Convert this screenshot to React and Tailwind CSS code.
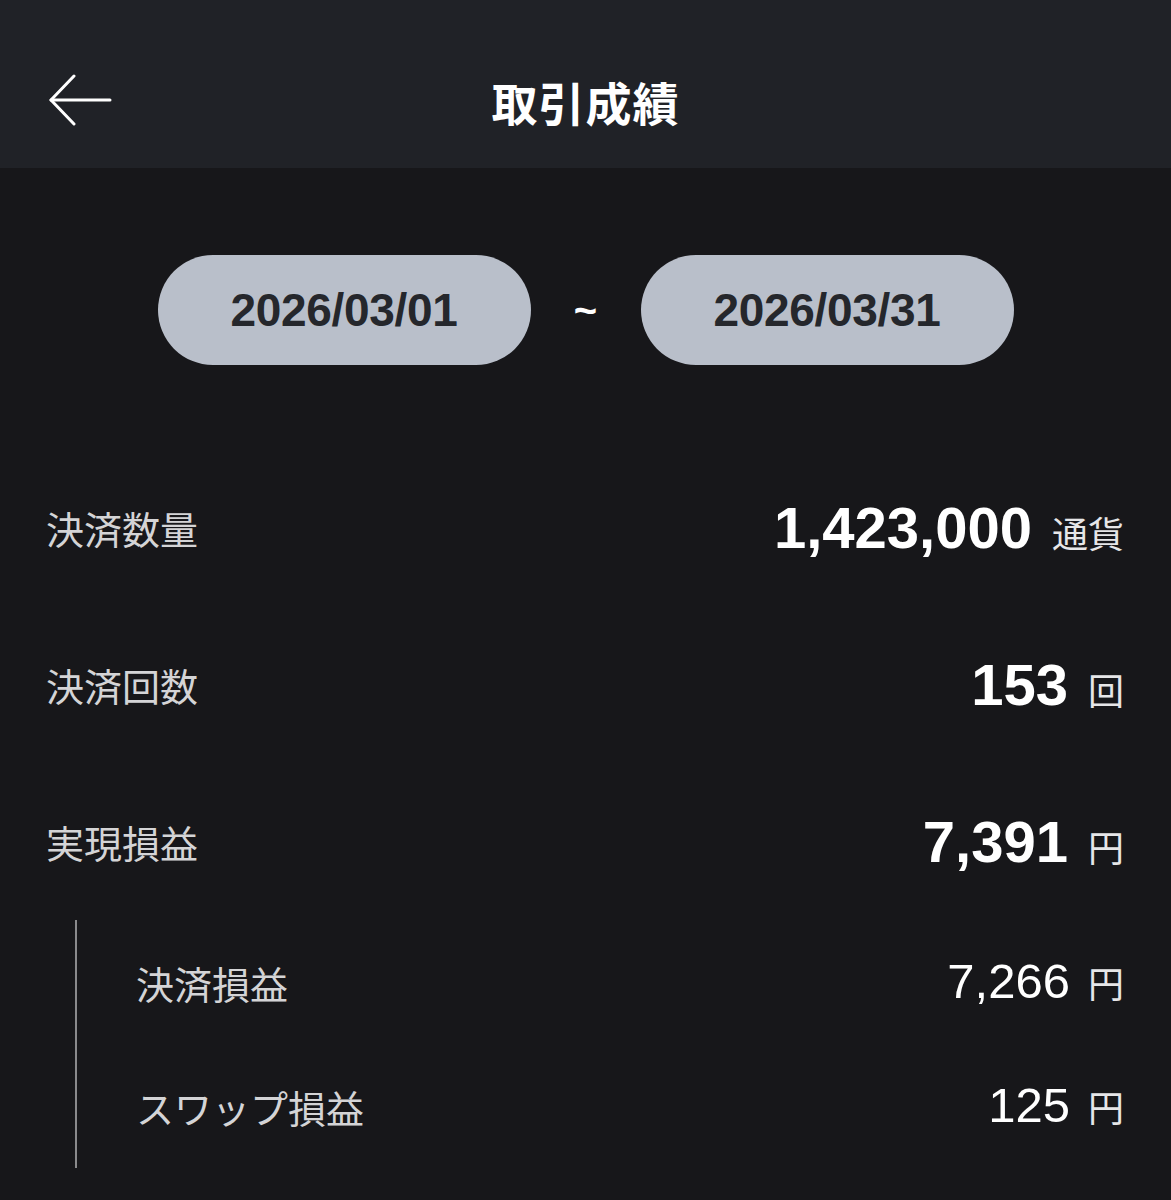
import React from "react"

const jp = { fontFamily: '"Noto Sans CJK JP", "Noto Sans", sans-serif' }
const num = { fontFamily: '"Liberation Sans", Arial, sans-serif' }

const BackArrow = () => (
  <svg width="64" height="52" viewBox="0 0 64 52" fill="none" stroke="#ffffff" strokeWidth="3" strokeLinecap="round" strokeLinejoin="round">
    <path d="M3 26 H62" />
    <path d="M26 2 L3 26 L26 50" />
  </svg>
)

const DatePill = ({ children }) => (
  <div
    className="w-[373px] h-[110px] rounded-full bg-[#b9bfca] flex items-center justify-center text-[46px] font-bold text-[#25272c] tracking-[-0.3px]"
    style={num}
  >
    {children}
  </div>
)

const MainRow = ({ label, value, unit }) => (
  <div className="h-[157px] flex items-center justify-between">
    <span className="text-[38px] text-[#d4d4d6]" style={jp}>{label}</span>
    <div className="flex items-baseline gap-[20px]">
      <span className="text-[58px] font-bold text-white" style={num}>{value}</span>
      <span className="text-[36px] text-[#e6e6e8]" style={jp}>{unit}</span>
    </div>
  </div>
)

const SubRow = ({ label, value, unit }) => (
  <div className="h-[124px] flex items-center justify-between">
    <span className="text-[38px] text-[#d4d4d6]" style={jp}>{label}</span>
    <div className="flex items-baseline gap-[18px]">
      <span className="text-[49px] text-white" style={num}>{value}</span>
      <span className="text-[36px] text-[#e6e6e8]" style={jp}>{unit}</span>
    </div>
  </div>
)

export default function App() {
  return (
    <div className="w-[1171px] min-h-[1200px] bg-[#17171a]">
      <header className="relative h-[168px] bg-[#202227] flex items-center justify-center pt-[34px]">
        <div className="absolute left-[48px] top-[74px]">
          <BackArrow />
        </div>
        <h1 className="text-[46px] font-bold text-white tracking-[1px]" style={jp}>取引成績</h1>
      </header>

      <div className="pt-[87px] flex items-center justify-center gap-[36px]">
        <DatePill>2026/03/01</DatePill>
        <span className="text-[40px] font-bold text-white w-[38px] text-center" style={num}>~</span>
        <DatePill>2026/03/31</DatePill>
      </div>

      <div className="mt-[84px] pl-[46px] pr-[47px]">
        <MainRow label="決済数量" value="1,423,000" unit="通貨" />
        <MainRow label="決済回数" value="153" unit="回" />
        <MainRow label="実現損益" value="7,391" unit="円" />
        <div className="ml-[29px] border-l-2 border-[#8a8a8c] pl-[59px]">
          <SubRow label="決済損益" value="7,266" unit="円" />
          <SubRow label="スワップ損益" value="125" unit="円" />
        </div>
      </div>
    </div>
  )
}
